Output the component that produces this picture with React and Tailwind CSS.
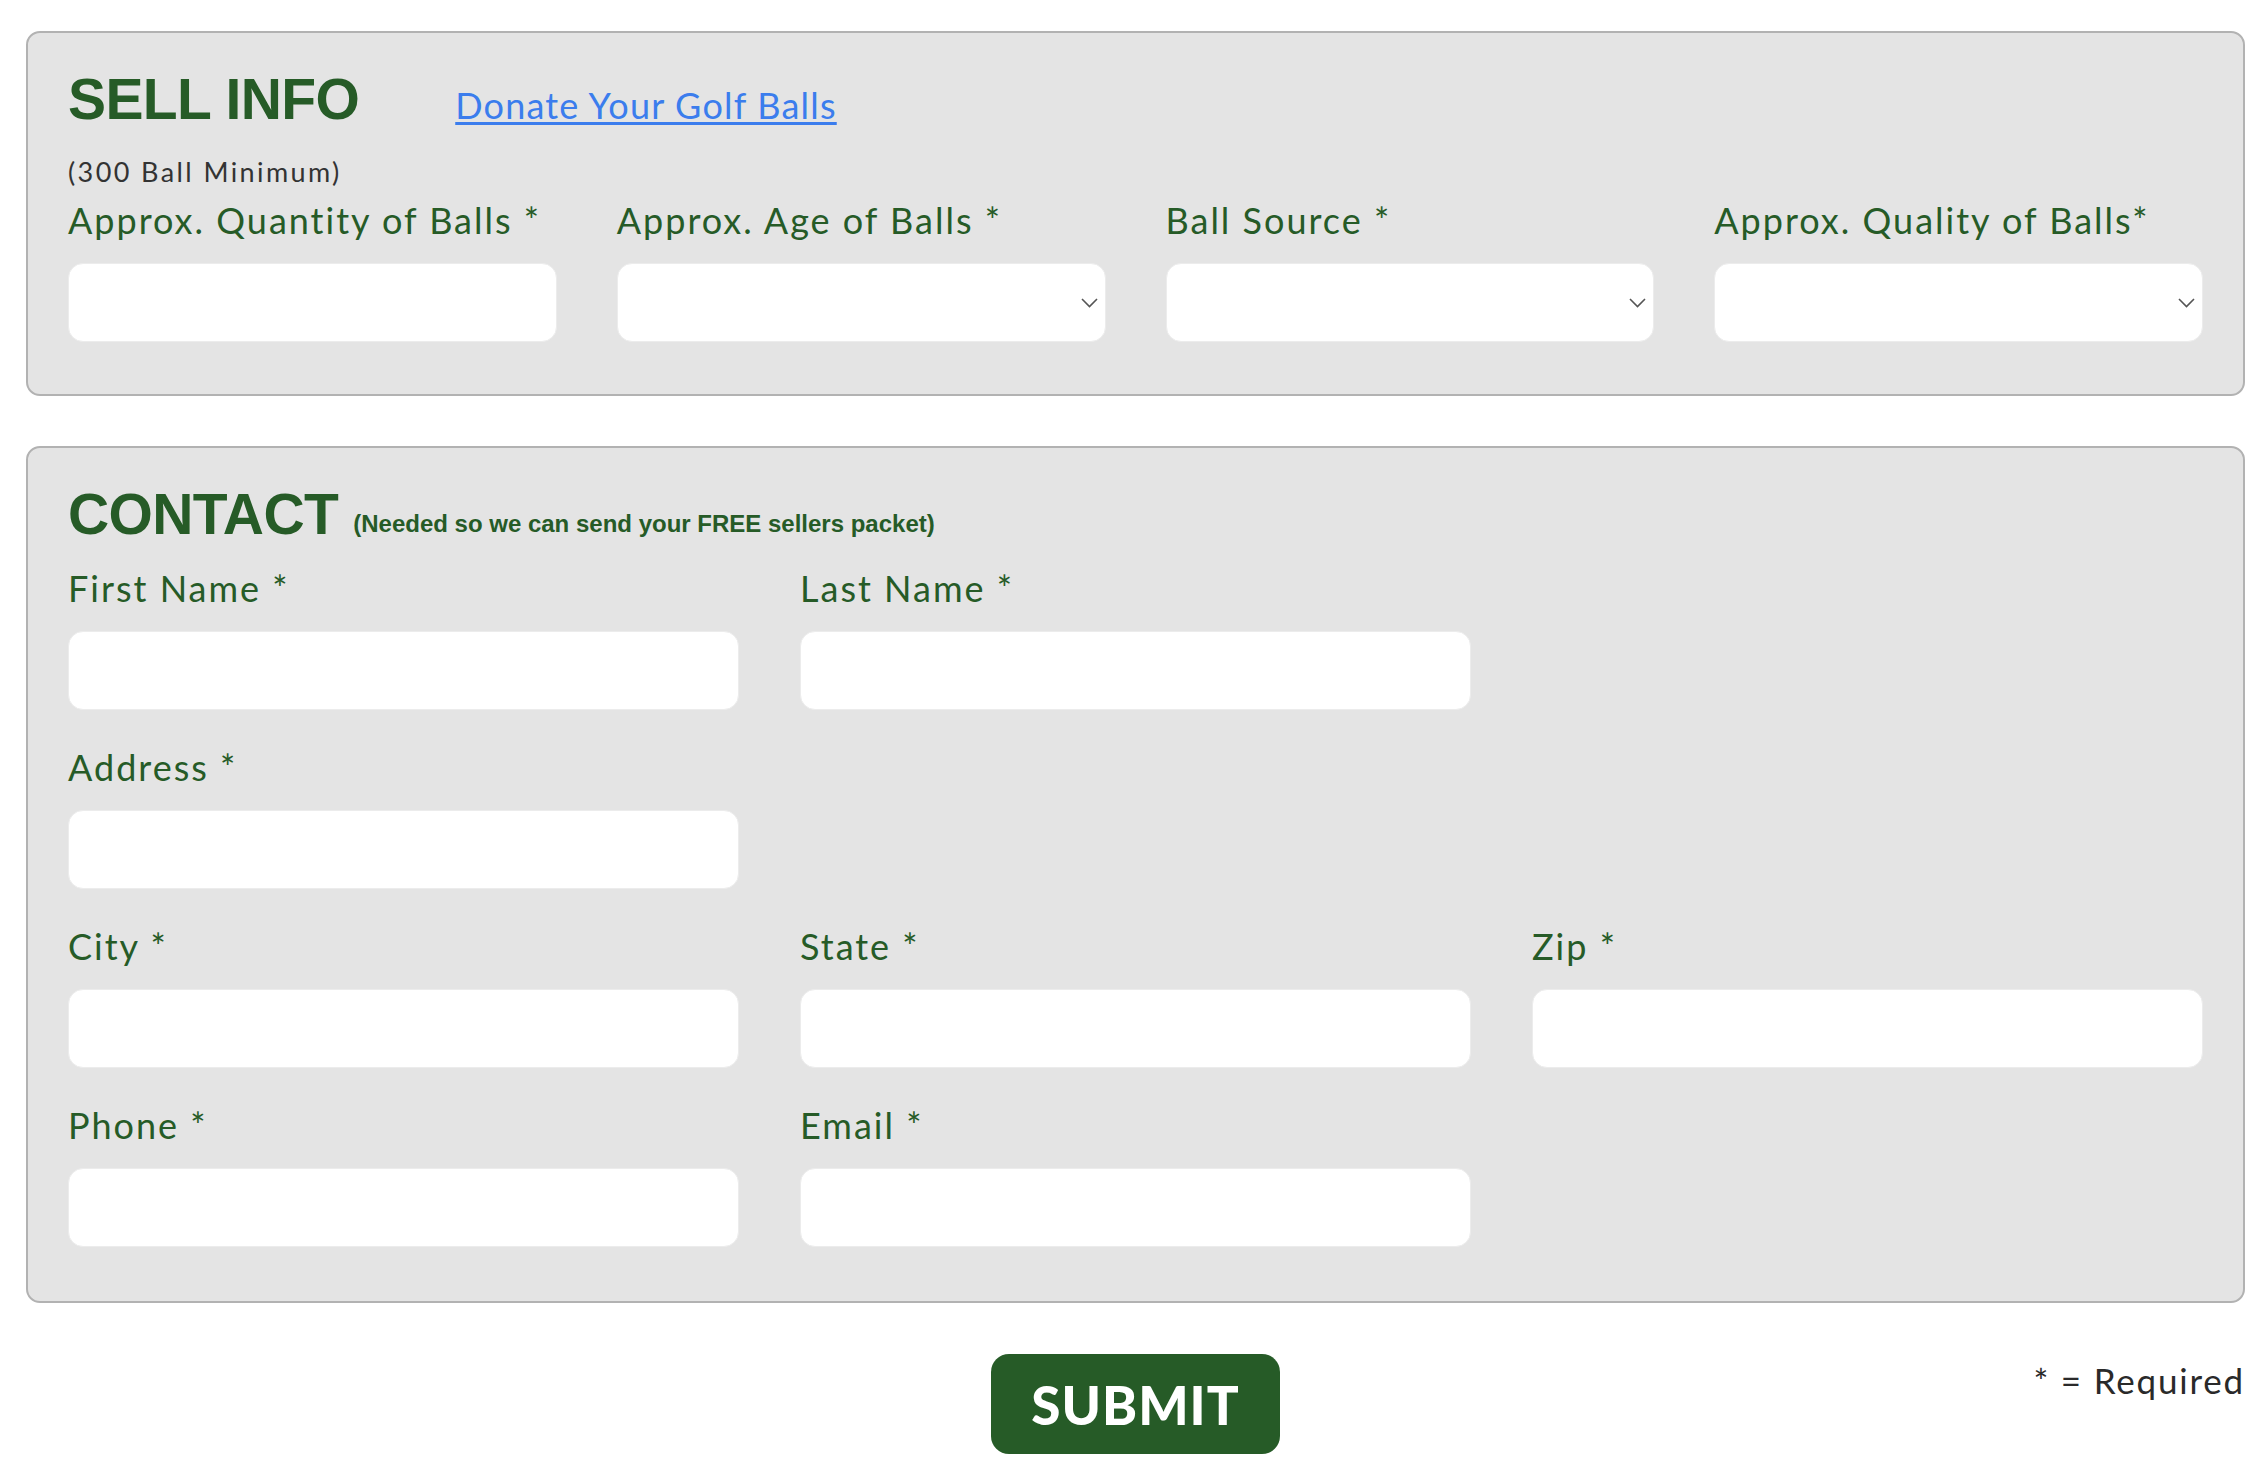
import React from "react";

// Small chevron used on the select boxes
const Chevron = () => (
  <svg
    width="17"
    height="10"
    viewBox="0 0 17 10"
    fill="none"
    className="pointer-events-none absolute right-[8px] top-1/2 -translate-y-1/2"
  >
    <polyline points="1,1 8.5,8.5 16,1" stroke="#555" strokeWidth="1.6" />
  </svg>
);

const Field = ({ label, select = false, className = "" }) => (
  <div className={className}>
    <label className="block text-[36px] leading-none tracking-[2px] text-[#265b27]">
      {label}
    </label>
    <div className="relative mt-[25px]">
      {select ? (
        <>
          <select className="block h-[79px] w-full appearance-none rounded-[15px] border border-[#ececec] bg-white outline-none">
            <option value=""></option>
          </select>
          <Chevron />
        </>
      ) : (
        <input
          type="text"
          className="block h-[79px] w-full rounded-[15px] border border-[#ececec] bg-white outline-none"
        />
      )}
    </div>
  </div>
);

export default function App() {
  return (
    <div className="min-h-screen bg-white pl-[26px] pr-[17px] pt-[31px] font-['Lato',sans-serif]">
      {/* Sell info */}
      <section className="rounded-[14px] border-2 border-[#b2b2b2] bg-[#e4e4e4] px-[40px] pb-[52px] pt-[38px]">
        <div className="flex items-baseline">
          <h2 className="font-['Liberation_Sans',Arial,sans-serif] text-[57px] font-bold leading-none tracking-[-0.6px] text-[#265b27]">
            SELL INFO
          </h2>
          <a
            href="#"
            className="ml-[96px] text-[36px] leading-none tracking-[1.2px] text-[#3b7ded] underline decoration-[3px] underline-offset-[3px]"
          >
            Donate Your Golf Balls
          </a>
        </div>
        <p className="mt-[30px] text-[27px] leading-none tracking-[2.4px] text-[#333]">
          (300 Ball Minimum)
        </p>
        <div className="mt-[17px] grid grid-cols-4 gap-x-[60px]">
          <Field label="Approx. Quantity of Balls *" />
          <Field label="Approx. Age of Balls *" select />
          <Field label="Ball Source *" select />
          <Field label="Approx. Quality of Balls*" select />
        </div>
      </section>

      {/* Contact */}
      <section className="mt-[50px] rounded-[14px] border-2 border-[#b2b2b2] bg-[#e4e4e4] px-[40px] pb-[54px] pt-[38px]">
        <div className="flex items-baseline font-['Liberation_Sans',Arial,sans-serif] text-[#265b27]">
          <h2 className="text-[57px] font-bold leading-none tracking-[-0.6px]">CONTACT</h2>
          <span className="ml-[15px] -translate-y-[2px] text-[24px] font-bold leading-none">
            (Needed so we can send your FREE sellers packet)
          </span>
        </div>
        <div className="mt-[27px] grid grid-cols-3 gap-x-[61px] gap-y-[39px]">
          <Field label="First Name *" />
          <Field label="Last Name *" />
          <Field label="Address *" className="col-start-1" />
          <Field label="City *" className="col-start-1" />
          <Field label="State *" />
          <Field label="Zip *" />
          <Field label="Phone *" className="col-start-1" />
          <Field label="Email *" />
        </div>
      </section>

      <div className="mt-[51px] grid grid-cols-[1fr_auto_1fr] items-start">
        <div />
        <button className="h-[100px] w-[289px] rounded-[18px] bg-[#265b27] text-[53px] font-black leading-none tracking-[1px] text-white">
          SUBMIT
        </button>
        <p className="mt-[9px] justify-self-end text-[35px] leading-none tracking-[1.8px] text-[#2a2a2a]">
          * = Required
        </p>
      </div>
    </div>
  );
}
